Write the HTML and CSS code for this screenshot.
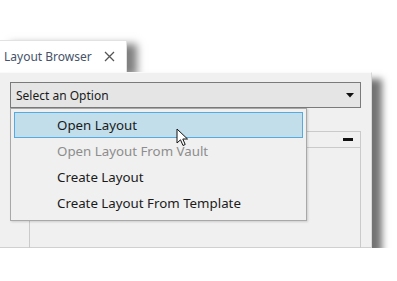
FILE: index.html
```html
<!DOCTYPE html>
<html lang="en">
<head>
  <meta charset="UTF-8">
  <meta name="viewport" content="width=device-width, initial-scale=1">
  <title>Layout Browser</title>
  <link rel="stylesheet" href="styles.css">
</head>
<body>
  <div class="window">
    <div class="tab">
      <span class="tab-title">Layout Browser</span>
      <svg class="tab-close" width="11" height="11" viewBox="0 0 11 11">
        <path d="M1 1 L10 10 M10 1 L1 10" stroke="#555" stroke-width="1.3" fill="none"/>
      </svg>
    </div>

    <div class="panel">
      <div class="combo">
        <span>Select an Option</span>
        <svg class="combo-arrow" width="8" height="5" viewBox="0 0 8 5">
          <path d="M0 0 H8 L4 4.5 Z" fill="#111"/>
        </svg>
      </div>

      <div class="group">
        <div class="group-header">
          <span class="collapse"></span>
        </div>
        <div class="group-body"></div>
      </div>

      <ul class="dropdown">
        <li class="item selected">Open Layout
          <svg class="cursor" width="13" height="19" viewBox="0 0 13 19">
            <path d="M1 1 L1 15 L4.5 11.8 L7 17.5 L9.2 16.5 L6.8 11 L11.5 11 Z" fill="#fff" stroke="#111" stroke-width="1" stroke-linejoin="round"/>
          </svg>
        </li>
        <li class="item disabled">Open Layout From Vault</li>
        <li class="item">Create Layout</li>
        <li class="item">Create Layout From Template</li>
      </ul>
    </div>
  </div>
</body>
</html>
```

FILE: styles.css
```css
body {
  margin: 0;
  padding: 0;
  background: #fff;
  font-family: 'Noto Sans', 'Open Sans', sans-serif;
  font-size: 12px;
  color: #1b1b1b;
}
.window {
  padding-top: 40px;
  width: 372px;
}
.tab {
  position: relative;
  width: 127px;
  height: 32px;
  box-sizing: border-box;
  background: #fff;
  border-top: 1px solid #e2e2e2;
  border-right: 1px solid #e2e2e2;
  display: flex;
  align-items: center;
  padding-left: 4px;
  box-shadow: 10px 4px 8px rgba(0,0,0,0.5);
}
.tab-title {
  color: #46536a;
  flex: 1;
}
.tab-close {
  margin-right: 11px;
}
.panel {
  position: relative;
  z-index: 1;
  height: 176px;
  box-sizing: border-box;
  background: #f0f0f0;
  border-top: 1px solid #fafafa;
  border-right: 1px solid #d8d8d8;
  border-bottom: 1px solid #d0d0d0;
  padding: 9px 10px 0 10px;
  box-shadow: 10px 7px 7px rgba(0,0,0,0.55);
}
.combo {
  height: 26px;
  box-sizing: border-box;
  border: 1px solid #7a7a7a;
  background: #e5e5e5;
  display: flex;
  align-items: center;
  justify-content: space-between;
  padding: 0 6px 0 5px;
}
.group {
  margin: 23px 0 0 19px;
  height: 117px;
  overflow: hidden;
}
.group-header {
  height: 17px;
  box-sizing: border-box;
  border: 1px solid #cacaca;
  background: #f0f0f0;
  display: flex;
  align-items: center;
  justify-content: flex-end;
  padding-right: 7px;
}
.collapse {
  width: 10px;
  height: 3px;
  background: #111;
}
.group-body {
  height: 100px;
  border-left: 1px solid #cacaca;
  border-right: 1px solid #cacaca;
}
.dropdown {
  position: absolute;
  left: 10px;
  top: 35px;
  width: 297px;
  box-sizing: border-box;
  margin: 0;
  padding: 3px 3px 4px 3px;
  list-style: none;
  background: #f0f0f0;
  border: 1px solid #a8a8a8;
  box-shadow: 1px 1px 2px rgba(0,0,0,0.15);
  font-size: 13.3px;
}
.item {
  position: relative;
  height: 26px;
  box-sizing: border-box;
  display: flex;
  align-items: center;
  padding-left: 42px;
  border: 1px solid transparent;
}
.item.selected {
  background: #c2deeb;
  border-color: #56aadd;
}
.item.disabled {
  color: #8d8d8d;
}
.cursor {
  position: absolute;
  left: 161px;
  top: 15px;
}
```
